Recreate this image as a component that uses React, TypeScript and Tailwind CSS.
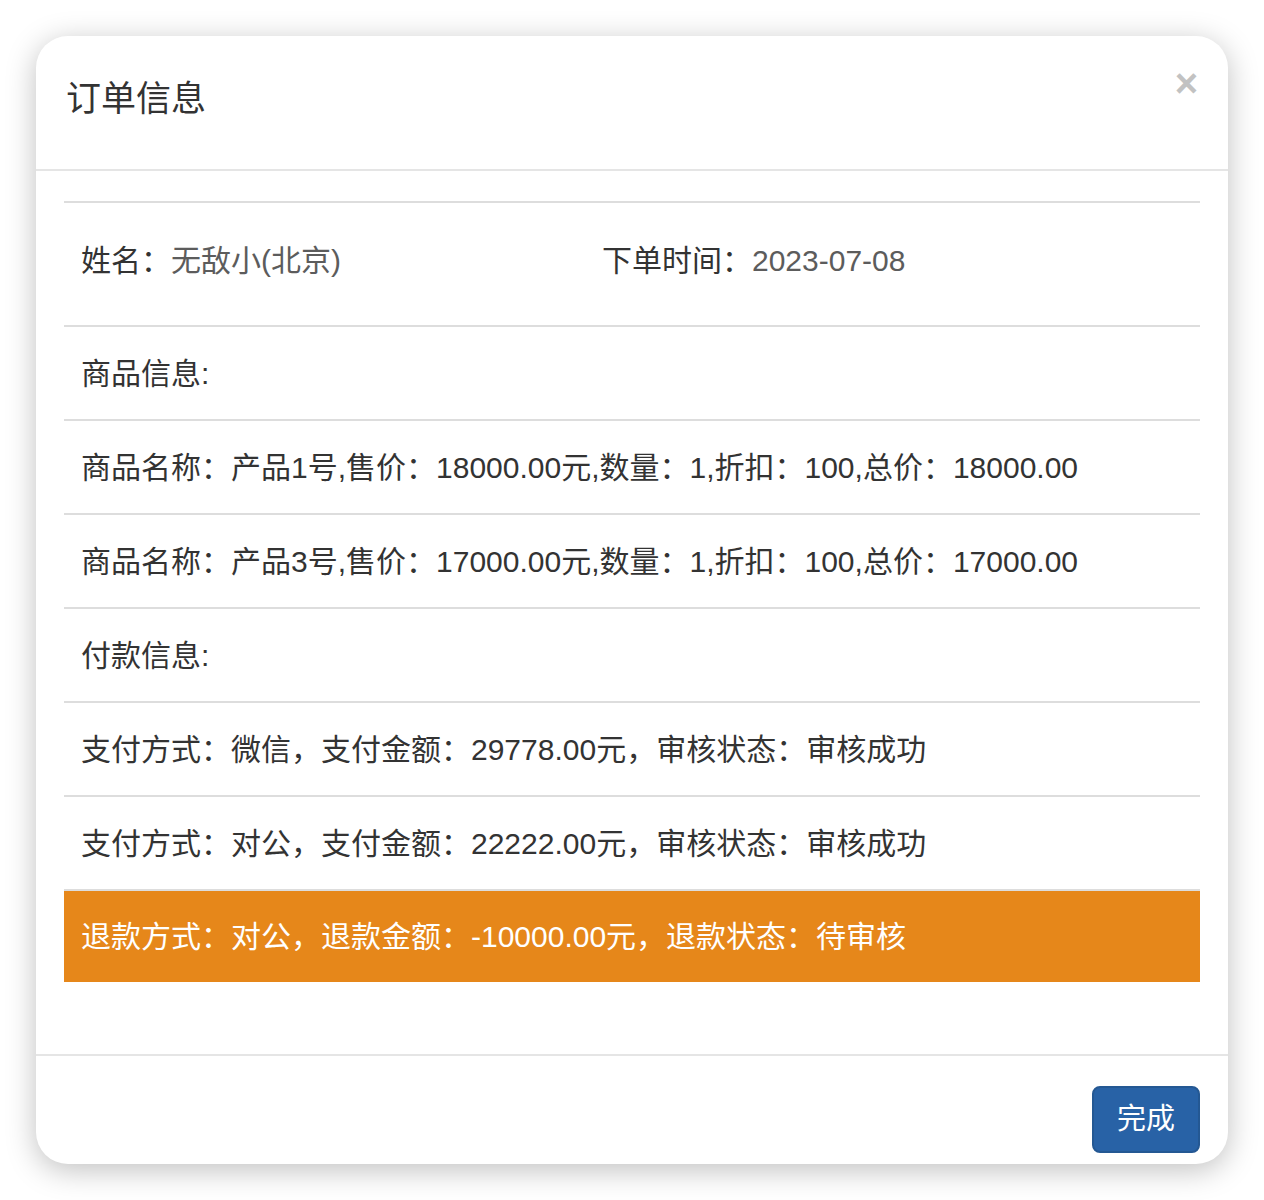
import { ReactNode } from 'react';

function Row({ children, className = '' }: { children: ReactNode; className?: string }) {
  return (
    <div className={`flex items-center h-[94px] px-[17px] border-t-2 border-[#dddddd] ${className}`}>
      {children}
    </div>
  );
}

export default function App() {
  const font = { fontFamily: '"Liberation Sans", "Noto Sans CJK SC", sans-serif' };

  return (
    <div className="min-h-[1200px] bg-white pt-[36px] px-[36px]" style={font}>
      <div className="w-[1192px] h-[1128px] bg-white rounded-[32px] shadow-[0_6px_30px_rgba(0,0,0,0.25)] flex flex-col">
        {/* header */}
        <div className="relative h-[135px] border-b-2 border-[#e5e5e5] px-[30px] flex items-center">
          <h3 className="text-[35px] text-[#333333] leading-none -mt-[8px]">订单信息</h3>
          <button className="absolute right-[30px] top-[27px] text-[#c2c2c2] text-[40px] font-bold leading-none">
            ×
          </button>
        </div>

        {/* body */}
        <div className="flex-1 px-[28px] pt-[30px] text-[30px] text-[#333333]">
          <div className="flex items-center h-[124px] px-[17px] pb-[8px] border-t-2 border-[#dddddd]">
            <div className="w-[521px]">
              姓名：<span className="text-[#5c5c5c]">无敌小(北京)</span>
            </div>
            <div>
              下单时间：<span className="text-[#5c5c5c]">2023-07-08</span>
            </div>
          </div>
          <Row>商品信息:</Row>
          <Row>商品名称：产品1号,售价：18000.00元,数量：1,折扣：100,总价：18000.00</Row>
          <Row>商品名称：产品3号,售价：17000.00元,数量：1,折扣：100,总价：17000.00</Row>
          <Row>付款信息:</Row>
          <Row>支付方式：微信，支付金额：29778.00元，审核状态：审核成功</Row>
          <Row>支付方式：对公，支付金额：22222.00元，审核状态：审核成功</Row>
          <div className="border-t-2 border-[#dddddd]">
            <div className="flex items-center h-[91px] px-[17px] bg-[#e6871a] text-white">
              退款方式：对公，退款金额：-10000.00元，退款状态：待审核
            </div>
          </div>
        </div>

        {/* footer */}
        <div className="h-[110px] border-t-2 border-[#e5e5e5] px-[28px] flex justify-end pt-[30px]">
          <button className="w-[108px] h-[67px] rounded-[8px] bg-[#2862a6] border-2 border-[#245893] text-white text-[29px]">
            完成
          </button>
        </div>
      </div>
    </div>
  );
}
